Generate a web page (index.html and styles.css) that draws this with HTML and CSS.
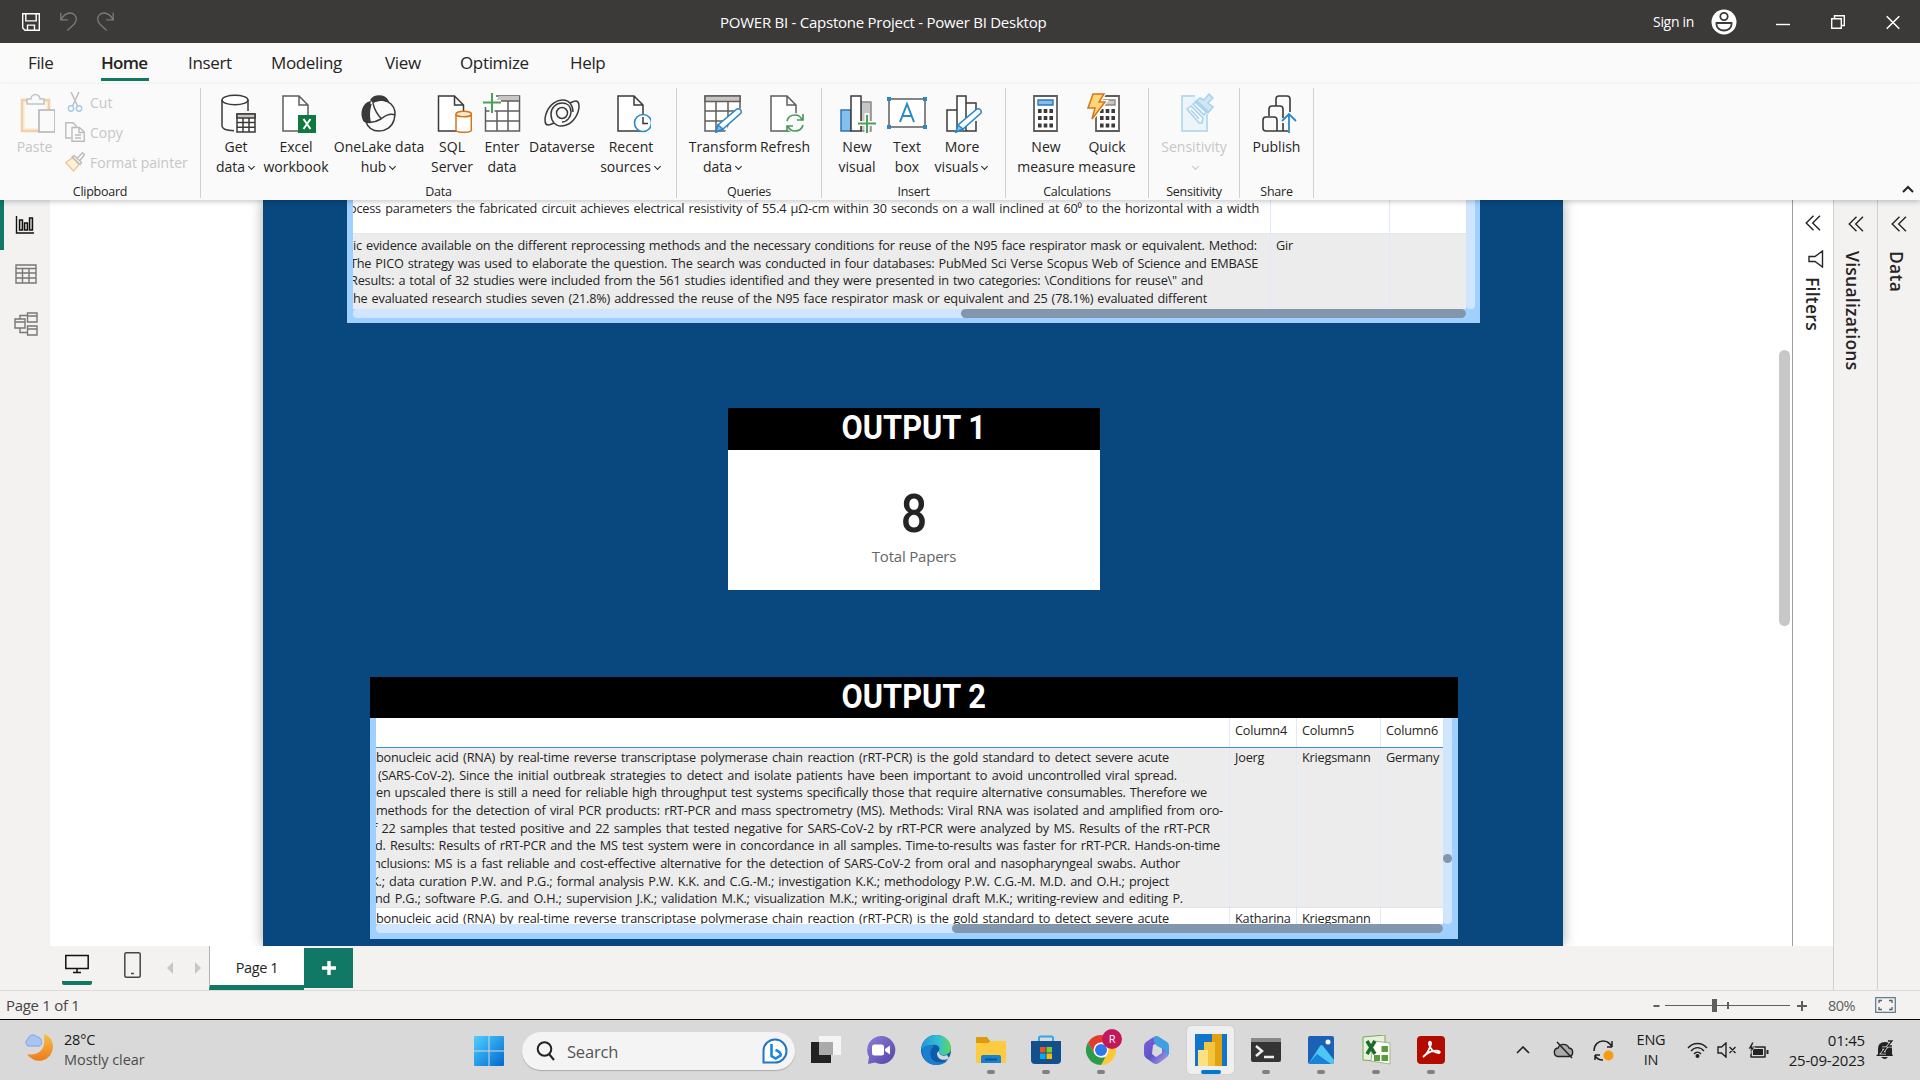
FILE: index.html
```html
<!DOCTYPE html>
<html lang="en">
<head>
<meta charset="utf-8">
<title>POWER BI - Capstone Project - Power BI Desktop</title>
<link rel="stylesheet" href="styles.css">
</head>
<body>
<header class="titlebar">
  <div class="quick">
    <svg width="18" height="18" viewBox="0 0 18 18" fill="none" stroke="#fff" stroke-width="1.4"><path d="M.7.7h16.6v16.6H3L.7 15zM3.8.7v7.2h10.4V.7M5.5 17.3v-5.2h7v5.2"/></svg>
    <svg width="17" height="19" viewBox="0 0 17 19" fill="none" stroke="#7d7b79" stroke-width="1.3"><path d="M.8.8v7h7M1 7.500C3 4 6 1 10 1c4 0 6.300 3 6.300 6 0 2-.8 3.500-2 5l-7 6.500"/></svg>
    <svg width="17" height="19" viewBox="0 0 17 19" fill="none" stroke="#7d7b79" stroke-width="1.3"><path d="M16.200.8v7h-7M16 7.500C14 4 11 1 7 1 3 1 .7 4 .7 7c0 2 .8 3.500 2 5l7 6.500"/></svg>
  </div>
  <h1 class="app-title">POWER BI - Capstone Project - Power BI Desktop</h1>
  <div class="account"><span class="signin">Sign in</span>
    <svg width="26" height="26" viewBox="0 0 26 26"><circle cx="13" cy="13" r="12.500" fill="#fff"/><g fill="none" stroke="#3b3a39" stroke-width="1.800"><circle cx="13" cy="7.500" r="3.700"/><path d="M5.500 14h15v1.500a7.500 6 0 0 1-15 0z"/></g></svg>
  </div>
  <div class="winbtns">
    <svg width="14" height="16" viewBox="0 0 14 16"><path d="M0 10.500h14" stroke="#fff" stroke-width="1.400"/></svg>
    <svg width="14" height="16" viewBox="0 0 14 16" fill="none" stroke="#fff" stroke-width="1.400"><path d="M.7 4.700h9.600v9.600H.7zM3.500 4.500V1.700h9.800v9.800h-3"/></svg>
    <svg width="14" height="16" viewBox="0 0 14 16" stroke="#fff" stroke-width="1.500"><path d="M.7 2.200l12.600 12.600M13.300 2.200L.7 14.800"/></svg>
  </div>
</header>

<nav class="tabs">
  <a class="t-file">File</a><a class="t-home active">Home</a><a class="t-insert">Insert</a><a class="t-model">Modeling</a><a class="t-view">View</a><a class="t-opt">Optimize</a><a class="t-help">Help</a>
</nav>

<section class="ribbon">
  <div class="group g-clip">
    <div class="items">
      <button class="cmd paste off"><svg class="ic" viewBox="0 0 40 40" fill="none"><path d="M7 7h27v31H7z" fill="#fdf0d5" stroke="#f0d0a8" stroke-width="2.500"/><path d="M10 10h21v25H10z" fill="#fafafa"/><path d="M12 11V6h4a4.500 4.500 0 0 1 9 0h4v5z" fill="#fafafa" stroke="#c4c4c4" stroke-width="1.600"/><path d="M24 17h16v22H24z" fill="#fafafa" stroke="#b4b4b4" stroke-width="1.600"/></svg><span>Paste</span></button>
      <div class="minis">
        <button class="mini"><svg width="20" height="20" viewBox="0 0 20 20" fill="none" stroke="#bbb" stroke-width="1.400"><path d="M6 0l6.500 14M14 0L7.500 14"/><g stroke="#a5cbe3"><circle cx="6" cy="16.500" r="2.700"/><circle cx="14" cy="16.500" r="2.700"/></g></svg>Cut</button>
        <button class="mini"><svg width="20" height="20" viewBox="0 0 20 20" fill="none" stroke="#bbb" stroke-width="1.400"><path d="M6 16H.8V.8H8l3 3v2"/><path d="M7 5.500h7.500l4.700 4.500v9.300H7zM14 6v4.500h5M10 13h6M10 16h6"/></svg>Copy</button>
        <button class="mini"><svg width="20" height="20" viewBox="0 0 20 20" fill="none" stroke="#bbb" stroke-width="1.400"><path d="M.8 10.500L8 5.500l6 7L8.500 19z" fill="#fdf0d5" stroke="#ecc79d"/><path d="M7 5l2-1.500 7.500 7-1.500 2zM12 6.500L17.500.8l2 2L14.500 9"/></svg>Format painter</button>
      </div>
    </div>
    <div class="gname">Clipboard</div>
  </div>

  <div class="group g-data">
    <div class="items">
      <button class="cmd w60"><svg class="ic" viewBox="0 0 40 40" fill="none" stroke="#3b3a39" stroke-width="1.500"><ellipse cx="19" cy="7" rx="13" ry="4.800" fill="#fff"/><path d="M6 7v26c0 2.600 5 4.500 12 4.800M32 7v11"/><path d="M21 21h18v18H21z" fill="#fff"/><path d="M21 21h18v4H21z" fill="#c8c6c4"/><path d="M21 29.500h18M21 34.300h18M27 25v14M33 25v14"/></svg><span>Get<br>data<i class="dd"></i></span></button>
      <button class="cmd w60"><svg class="ic" viewBox="0 0 40 40"><path d="M7 3h16l9 9v26H7zM23 3v9h9" fill="#fff" stroke="#605e5c" stroke-width="1.500"/><path d="M22 22h18v18H22z" fill="#10793f"/><path d="M27.500 26l7 10M34.500 26l-7 10" stroke="#fff" stroke-width="2"/></svg><span>Excel<br>workbook</span></button>
      <button class="cmd w106"><svg class="ic" viewBox="0 0 40 40" fill="none" stroke="#3b3a39" stroke-width="1.500"><path d="M5 28C1 20 4 11 11 9c-1 7-2 14-1 20-2 0-4 0-5-1zM12 7c3-5 13-6 17 1-6-2-11-1-15 1z" fill="#3b3a39"/><path d="M14 9c6-3 14-2 18 2 4 4 5 10 3 16-2 7-8 11-15 11-6 0-11-3-13-9 5 1 10 0 15-3 5-4 9-6 14-4M14 10c1 6 5 13 9 16M12 11c-2 6-2 13-1 18"/></svg><span>OneLake data<br>hub<i class="dd"></i></span></button>
      <button class="cmd w40"><svg class="ic" viewBox="0 0 40 40"><path d="M6.500 3h16l9 9v26h-25zM22.500 3v9h9" fill="#fff" stroke="#3b3a39" stroke-width="1.500"/><path d="M24 21v16c0 1.500 3.500 2.300 7.500 2.300S39.300 38.500 39.300 37V21" fill="#fff" stroke="#d67417" stroke-width="1.500"/><ellipse cx="31.700" cy="21" rx="7.700" ry="2.800" fill="#fdebd0" stroke="#d67417" stroke-width="1.500"/></svg><span>SQL<br>Server</span></button>
      <button class="cmd w60"><svg class="ic" viewBox="0 0 40 40" fill="none" stroke="#605e5c" stroke-width="1.500"><path d="M3.500 14v24h34V3H14" fill="#fff"/><path d="M17 3h20v5H14z" fill="#c8c6c4" stroke="none"/><path d="M17 8h20M3.500 18h34M3.500 28h34M15 18v20M26 8v30"/><path d="M10 0v20M1 9.500h18" stroke="#fafafa" stroke-width="5"/><path d="M10 0v20M1 9.500h18" stroke="#4ba155" stroke-width="2"/></svg><span>Enter<br>data</span></button>
      <button class="cmd w60"><svg class="ic" viewBox="0 0 40 40" fill="none" stroke="#3b3a39" stroke-width="1.500"><circle cx="20" cy="20" r="5.500"/><path d="M34 8c3 0 4 5 2 11-3 9-10 14-17 14-6 0-10-5-10-12 0-6 5-11 11-11 5 0 9 3 9 9 0 5-4 10-9 10"/><path d="M6 32c-3 0-4-5-2-11C7 12 14 7 21 7c6 0 10 5 10 12M34 8c-2 0-4 1-6 2M6 32c2 0 4-1 6-2"/></svg><span>Dataverse</span></button>
      <button class="cmd w76"><svg class="ic" viewBox="0 0 40 40" fill="none"><path d="M7 3h16l9 9v26H7zM23 3v9h9" fill="#fff" stroke="#3b3a39" stroke-width="1.500"/><circle cx="32" cy="30" r="8.500" fill="#fff" stroke="#2b88c8" stroke-width="1.600"/><path d="M32 24v6.500h5" stroke="#3b3a39" stroke-width="1.500"/></svg><span>Recent<br>sources<i class="dd"></i></span></button>
    </div>
    <div class="gname">Data</div>
  </div>

  <div class="group g-query">
    <div class="items">
      <button class="cmd w78"><svg class="ic" viewBox="0 0 40 40" fill="none" stroke="#605e5c" stroke-width="1.500"><path d="M2 3h35v35H2z" fill="#fff"/><path d="M2 3h35v5.500H2z" fill="#c8c6c4"/><path d="M2 18h35M2 28h35M13 9v29M25 9v29"/><path d="M22 39h18V14l-6 4z" fill="#fafafa" stroke="none"/><path d="M13 39l2-7 19-16c2-1 5 1 4 4L20 36z" fill="#fff" stroke="#2b88c8"/><path d="M13 39l2-7 5 4z" fill="#83beec" stroke="#2b88c8"/></svg><span>Transform<br>data<i class="dd"></i></span></button>
      <button class="cmd w46"><svg class="ic" viewBox="0 0 40 40" fill="none"><path d="M6 3h16l9 9v26H6zM22 3v9h9" fill="#fff" stroke="#605e5c" stroke-width="1.500"/><circle cx="30" cy="30" r="10" fill="#fafafa"/><path d="M22 28c1-4 4-6 8-6 3 0 6 2 7 5M38 21v6h-6M38 32c-1 4-4 6-8 6-3 0-6-2-7-5M22 39v-6h6" stroke="#4b9b58" stroke-width="1.700"/></svg><span>Refresh</span></button>
    </div>
    <div class="gname">Queries</div>
  </div>

  <div class="group g-insert">
    <div class="items">
      <button class="cmd w50"><svg class="ic" viewBox="0 0 40 40" stroke="#3b3a39" stroke-width="1.500"><path d="M24 9h10v29H24z" fill="#c8c6c4" stroke="#8a8886"/><path d="M4 17h10v21H4z" fill="#83beec" stroke="#2b78b8"/><path d="M14 3h10v35H14z" fill="#fff"/><path d="M30 20v20M20 30.500h19" stroke="#fafafa" stroke-width="5"/><path d="M30 22v18M21 30.500h18" stroke="#4ba155" stroke-width="2"/></svg><span>New<br>visual</span></button>
      <button class="cmd w50"><svg class="ic" viewBox="0 0 40 40" fill="none"><path d="M2 6h36v28H2z" fill="#fff" stroke="#605e5c" stroke-width="1.500"/><path d="M0 4h4v4H0zM36 4h4v4h-4zM0 32h4v4H0zM36 32h4v4h-4z" fill="#2b88c8"/><path d="M13 29l7-18 7 18M15.500 23h9" stroke="#2b88c8" stroke-width="2"/></svg><span>Text<br>box</span></button>
      <button class="cmd w60"><svg class="ic" viewBox="0 0 40 40" stroke="#3b3a39" stroke-width="1.500" fill="#fff"><path d="M24 10h10v28H24zM5 17h10v21H5zM15 3h9v35h-9z"/><path d="M25 39h14V15l-7 4z" fill="#fafafa" stroke="none"/><path d="M14 39l2-7 19-16c2-1 5 1 4 4L21 36z" stroke="#2b88c8"/><path d="M14 39l2-7 5 4z" fill="#83beec" stroke="#2b88c8"/><path d="M34 28v10h-9" fill="none"/></svg><span>More<br>visuals<i class="dd"></i></span></button>
    </div>
    <div class="gname">Insert</div>
  </div>

  <div class="group g-calc">
    <div class="items">
      <button class="cmd w60"><svg class="ic" viewBox="0 0 40 40"><path d="M8 3h23v35H8z" fill="#fff" stroke="#605e5c" stroke-width="1.800"/><path d="M12 7h15v5H12z" fill="#83beec" stroke="#2b78b8" stroke-width="1.400"/><path d="M12 18h15M12 25h15M12 32.500h15" stroke="#3b3a39" stroke-width="4" stroke-dasharray="3.600 2.100"/></svg><span>New<br>measure</span></button>
      <button class="cmd w62"><svg class="ic" viewBox="0 0 40 40"><path d="M9 3h23v35H9z" fill="#fff" stroke="#605e5c" stroke-width="1.800"/><path d="M16 7h12v5H16z" fill="#c8c6c4" stroke="#8a8886" stroke-width="1.400"/><path d="M13 18h15M13 25h15M13 32.500h15" stroke="#3b3a39" stroke-width="4" stroke-dasharray="3.600 2.100"/><path d="M6 1h11l-5 8h6L5 26l3-11H1z" fill="#ffd77a" stroke="#fafafa" stroke-width="4"/><path d="M6 1h11l-5 8h6L5 26l3-11H1z" fill="#ffd77a" stroke="#d67417" stroke-width="1.500"/></svg><span>Quick<br>measure</span></button>
    </div>
    <div class="gname">Calculations</div>
  </div>

  <div class="group g-sens">
    <div class="items">
      <button class="cmd w60 off"><svg class="ic" viewBox="0 0 40 40" fill="none" stroke="#a9d3ec" stroke-width="1.500"><path d="M21 3H8v35h25V21" fill="#eef5fa"/><path d="M13 16l4-3 12 12-1 5-3 0zM17 17l8 9" fill="#fafafa"/><path d="M21 9l5-4 4 2 5-6 4 4-5 5 5 4-5 6z" fill="#cfe6f4"/><path d="M23 8l12 11M19 11l3-2 10 10-2 3z"/></svg><span>Sensitivity<br><i class="dd"></i></span></button>
    </div>
    <div class="gname">Sensitivity</div>
  </div>

  <div class="group g-share">
    <div class="items">
      <button class="cmd w60"><svg class="ic" viewBox="0 0 40 40" fill="none" stroke="#3b3a39" stroke-width="1.600"><path d="M19 13V6c0-2 1-3 3-3h8c2 0 3 1 3 3v13M12 23v-7c0-2 1-3 3-3h8c2 0 3 1 3 3v9M20 38V27c0-2-1-3-3-3h-8c-2 0-3 1-3 3v8c0 2 1 3 3 3h22M26 30v8"/><path d="M32 40V21M25 28l7-7 7 7" stroke="#2b88c8" stroke-width="1.800"/></svg><span>Publish</span></button>
    </div>
    <div class="gname">Share</div>
  </div>
  <svg class="collapse" width="12" height="8" viewBox="0 0 12 8"><path d="M1 7l5-5 5 5" fill="none" stroke="#252423" stroke-width="2"/></svg>
</section>

<main class="work">
  <aside class="views">
    <div class="v on"><svg width="20" height="20" viewBox="0 0 20 20" fill="#c8c6c4" stroke="#111" stroke-width="1.400"><path d="M1.500 1v17H19" fill="none"/><path d="M4.500 5h3v10h-3zM9.500 8h3v7h-3zM14.500 3h3v12h-3z"/></svg></div>
    <div class="v"><svg width="22" height="20" viewBox="0 0 22 20" fill="none" stroke="#797775" stroke-width="1.400"><path d="M1 1h20v18H1zM1 4.500h20M1 9h20M1 14h20M7.500 4.500V19M14 4.500V19"/></svg></div>
    <div class="v"><svg width="24" height="24" viewBox="0 0 24 24" fill="none" stroke="#797775" stroke-width="1.400"><path d="M1 7h10v9H1zM1 10h10M13.500 1h9.500v9h-9.500zM13.500 4h9.500M13.500 14h9.500v9h-9.500zM13.500 17h9.500M6 7V3.500h7.500M6 16v4.500h7.500"/></svg></div>
  </aside>

  <div class="canvas">
    <div class="page">
      <section class="visual table1">
        <div class="grid">
          <div class="row tail">
            <div class="cell abs"><p style="width:910px;margin-left:-4px">ocess parameters the fabricated circuit achieves electrical resistivity of 55.4 µΩ-cm within 30 seconds on a wall inclined at 60⁰ to the horizontal with a width</p></div><div class="cell n1"></div><div class="cell n2"></div>
          </div>
          <div class="row grey">
            <div class="cell abs"><p style="width:904px">ic evidence available on the different reprocessing methods and the necessary conditions for reuse of the N95 face respirator mask or equivalent. Method:</p><p style="width:908px;margin-left:-3px">The PICO strategy was used to elaborate the question. The search was conducted in four databases: PubMed Sci Verse Scopus Web of Science and EMBASE</p><p style="width:853px;margin-left:-3px">Results: a total of 32 studies were included from the 561 studies identified and they were presented in two categories: \Conditions for reuse\" and</p><p style="width:854px">he evaluated research studies seven (21.8%) addressed the reuse of the N95 face respirator mask or equivalent and 25 (78.1%) evaluated different</p></div><div class="cell n1">Gir</div><div class="cell n2"></div>
          </div>
        </div>
        <div class="vtrack"></div>
        <div class="htrack"><div class="thumb"></div></div>
      </section>

      <section class="visual card">
        <h2><span>OUTPUT 1</span></h2>
        <div class="value">8</div>
        <div class="label">Total Papers</div>
      </section>

      <section class="visual table2">
        <h2><span>OUTPUT 2</span></h2>
        <div class="grid">
          <div class="row head"><div class="cell abs"></div><div class="cell c4">Column4</div><div class="cell c5">Column5</div><div class="cell c6">Column6</div></div>
          <div class="row grey">
            <div class="cell abs"><p style="width:793px">bonucleic acid (RNA) by real-time reverse transcriptase polymerase chain reaction (rRT-PCR) is the gold standard to detect severe acute</p><p style="width:799px;margin-left:2px">(SARS-CoV-2). Since the initial outbreak strategies to detect and isolate patients have been important to avoid uncontrolled viral spread.</p><p style="width:831px">en upscaled there is still a need for reliable high throughput test systems specifically those that require alternative consumables. Therefore we</p><p style="width:847px">methods for the detection of viral PCR products: rRT-PCR and mass spectrometry (MS). Methods: Viral RNA was isolated and amplified from oro-</p><p style="width:837px;margin-left:-3px">f 22 samples that tested positive and 22 samples that tested negative for SARS-CoV-2 by rRT-PCR were analyzed by MS. Results of the rRT-PCR</p><p style="width:845px;margin-left:-1px">d. Results: Results of rRT-PCR and the MS test system were in concordance in all samples. Time-to-results was faster for rRT-PCR. Hands-on-time</p><p style="width:807px;margin-left:-3px">nclusions: MS is a fast reliable and cost-effective alternative for the detection of SARS-CoV-2 from oral and nasopharyngeal swabs. Author</p><p style="width:798px;margin-left:-5px">K.; data curation P.W. and P.G.; formal analysis P.W. K.K. and C.G.-M.; investigation K.K.; methodology P.W. C.G.-M. M.D. and O.H.; project</p><p style="width:808px;margin-left:-1px">nd P.G.; software P.G. and O.H.; supervision J.K.; validation M.K.; visualization M.K.; writing-original draft M.K.; writing-review and editing P.</p></div><div class="cell c4">Joerg</div><div class="cell c5">Kriegsmann</div><div class="cell c6">Germany</div>
          </div>
          <div class="row cut"><div class="cell abs"><p style="width:793px">bonucleic acid (RNA) by real-time reverse transcriptase polymerase chain reaction (rRT-PCR) is the gold standard to detect severe acute</p></div><div class="cell c4">Katharina</div><div class="cell c5">Kriegsmann</div><div class="cell c6"></div></div>
        </div>
        <div class="vtrack"><div class="dot"></div></div>
        <div class="htrack"><div class="thumb"></div></div>
      </section>
    </div>
    <div class="vscroll"></div>
  </div>

  <aside class="pane filters">
    <svg class="chev" viewBox="0 0 16 16"><path d="M8.500.7L1.200 8l7.300 7.300M15 .7L7.700 8l7.300 7.300"/></svg>
    <svg class="funnel" width="16" height="18" viewBox="0 0 16 18" fill="none" stroke="#252423" stroke-width="1.400"><path d="M14.500 1v16L7 11.500H1v-5h6z"/></svg>
    <span>Filters</span>
  </aside>
  <aside class="pane vis"><svg class="chev" viewBox="0 0 16 16"><path d="M8.500.7L1.200 8l7.300 7.300M15 .7L7.700 8l7.300 7.300"/></svg><span>Visualizations</span></aside>
  <aside class="pane data"><svg class="chev" viewBox="0 0 16 16"><path d="M8.500.7L1.200 8l7.300 7.300M15 .7L7.700 8l7.300 7.300"/></svg><span>Data</span></aside>

  <div class="pagetabs">
    <div class="desk"><svg width="24" height="20" viewBox="0 0 24 20" fill="none" stroke="#111" stroke-width="1.500"><path d="M.8 1.500h22.400v13H.8zM12 14.500v4M8 18.500h8"/></svg></div>
    <svg class="phone" width="17" height="26" viewBox="0 0 17 26" fill="none" stroke="#484644" stroke-width="1.500"><rect x=".8" y=".8" width="15.400" height="24.400" rx="1.500"/><path d="M7 21.500h3"/></svg>
    <svg class="arr" width="6" height="12" viewBox="0 0 6 12"><path d="M6 0v12L0 6z" fill="#c8c6c4"/></svg>
    <svg class="arr two" width="6" height="12" viewBox="0 0 6 12"><path d="M0 0v12l6-6z" fill="#c8c6c4"/></svg>
    <div class="ptab">Page 1</div>
    <div class="add"><svg width="14" height="14" viewBox="0 0 14 14"><path d="M7 0v14M0 7h14" stroke="#fff" stroke-width="3.400"/></svg></div>
  </div>
</main>

<footer class="status">
  <span class="pcount">Page 1 of 1</span>
  <div class="zoom">
    <svg width="154" height="16" viewBox="0 0 154 16" stroke="#605e5c" fill="none"><path d="M.5 9h6M144 9h10M149 4v10" stroke-width="2"/><path d="M12 8.500h125" stroke-width="1.200"/><path d="M61.500 2v13" stroke-width="5"/><path d="M75 5v7" stroke-width="2"/></svg>
    <span class="pct">80%</span>
    <svg width="21" height="16" viewBox="0 0 21 16" fill="none" stroke="#605e5c" stroke-width="1.300"><path d="M.7.700h19.600v14.600H.7z" stroke="#5f7f95"/><path d="M4 6V3.500h3M14 3.500h3V6M17 10v2.500h-3M7 12.500H4V10"/></svg>
  </div>
</footer>

<div class="taskbar">
  <div class="weather">
    <svg width="30" height="30" viewBox="0 0 30 30"><defs><linearGradient id="mo" x2="0" y2="1"><stop stop-color="#f5c14a"/><stop offset="1" stop-color="#ee7a1c"/></linearGradient></defs><path d="M20 1c6 2 9 7 9 13a14 14 0 0 1-26 7c8 2 16-2 17-10 .5-4 0-7 0-10z" fill="url(#mo)"/><path d="M4 13a4 4 0 0 1 0-7 5 5 0 0 1 9-2c4-1 7 8 2 9z" fill="#a9c4f2" stroke="#7fa2e0"/></svg>
    <div class="wtxt"><b>28°C</b><span>Mostly clear</span></div>
  </div>
  <div class="start"><svg width="30" height="30" viewBox="0 0 30 30"><defs><linearGradient id="wn" x2="1" y2="1"><stop stop-color="#4fd0ff"/><stop offset="1" stop-color="#0068cf"/></linearGradient></defs><path d="M0 1q0-1 1-1h13.500v14.500H0zM15.500 0H29q1 0 1 1v13.500H15.500zM0 15.500h14.500V30H1q-1 0-1-1zM15.500 15.500H30V29q0 1-1 1H15.500z" fill="url(#wn)"/></svg></div>
  <div class="search">
    <svg width="19" height="20" viewBox="0 0 19 20" fill="none" stroke="#222" stroke-width="2"><circle cx="8.500" cy="8" r="6.800"/><path d="M13 13l5 6"/></svg>
    <span>Search</span>
    <svg width="26" height="26" viewBox="0 0 26 26"><path d="M1.500 24.500V12.500a11.500 11.500 0 1 1 11.500 12z" fill="#fff" stroke="#2176c7" stroke-width="2"/><path d="M9.500 6v12l4 2.500 5-3c1-2-1-4-5-5.500" fill="none" stroke="#1a86dc" stroke-width="2.600"/></svg>
  </div>
  <div class="apps">
    <div class="app"><svg viewBox="0 0 30 30"><path d="M0 7h20v21H0z" fill="#222"/><path d="M8 1h22v19H8z" fill="#f4f4f4"/><path d="M8 7h14v13H8z" fill="#aaa"/></svg></div>
    <div class="app"><svg viewBox="0 0 30 30"><defs><linearGradient id="ch" x2="1" y2="1"><stop stop-color="#8f7ed6"/><stop offset="1" stop-color="#5145a8"/></linearGradient></defs><path d="M15 1a14 14 0 1 1-6 26.500L2 29l1-7A14 14 0 0 1 15 1z" fill="url(#ch)"/><rect x="6" y="9.500" width="12" height="11" rx="2.500" fill="#fff"/><path d="M19 14l5-3.500v9L19 16z" fill="#fff"/></svg></div>
    <div class="app"><svg viewBox="0 0 30 30"><defs><linearGradient id="eg" x2="1"><stop stop-color="#1e96dc"/><stop offset=".6" stop-color="#35c1d0"/><stop offset="1" stop-color="#5fd656"/></linearGradient></defs><circle cx="15" cy="15" r="15" fill="#0d5ca8"/><path d="M0 15C1 5 8 0 15 0c9 0 15 6 15 13 0 4-3 7-7 7s-6-2-5-4c2-4-2-7-7-6C5 10 2 13 0 15z" fill="url(#eg)"/><path d="M1 15c3-5 9-6 12-4-6 5-4 14 2 16 5 1 9 0 12-2-3 4-8 5-12 5C6 30 1 23 1 15z" fill="#1b7fd0"/><path d="M18 16c-1 3 3 6 8 4l2 3c-3 3-12 3-12-5z" fill="#d9d9d9"/></svg></div>
    <div class="app run"><svg viewBox="0 0 30 30"><path d="M0 3q0-1 1-1h10l3 4v6H0z" fill="#dd9a0c"/><path d="M0 8h12l3-2h15v21q0 1-1 1H1q-1 0-1-1z" fill="#fccb3f"/><path d="M5 28v-6q0-2 2-2h16q2 0 2 2v6z" fill="#1a80d0"/><path d="M9 24.500h12" stroke="#0b559b" stroke-width="2"/></svg></div>
    <div class="app run"><svg viewBox="0 0 30 30"><path d="M8 8V3q0-1.500 1.500-1.500h11Q22 1.500 22 3v5" fill="none" stroke="#33a9e6" stroke-width="2"/><path d="M0 6h30v19q0 4-4 4H4q-4 0-4-4z" fill="#144f8d"/><path d="M9 12h5.500v5.500H9z" fill="#f1511b"/><path d="M15.500 12H21v5.500h-5.500z" fill="#80cc28"/><path d="M9 18.500h5.500V24H9z" fill="#00adef"/><path d="M15.500 18.500H21V24h-5.500z" fill="#fbbc09"/></svg></div>
    <div class="app run chrome"><svg viewBox="0 0 30 30"><path d="M15 0a15 15 0 0 1 13 7.500H15L8.500 18.700 2 7.500A15 15 0 0 1 15 0z" fill="#e33b2e"/><path d="M2 7.500l6.500 11.200L15 22.500h6.500L15 30A15 15 0 0 1 2 7.500z" fill="#2c9c4b"/><path d="M28 7.500A15 15 0 0 1 15 30l6.500-11.300L22 12l-7-4.500z" fill="#fcc934"/><circle cx="15" cy="15" r="7.500" fill="#fff"/><circle cx="15" cy="15" r="6" fill="#2f77e8"/></svg><em>R</em></div>
    <div class="app"><svg viewBox="0 0 30 30"><defs><linearGradient id="m3" x1="0" x2="1" y2="1"><stop stop-color="#8a5be0"/><stop offset=".5" stop-color="#5a55c8"/><stop offset="1" stop-color="#b8a5ee"/></linearGradient></defs><path d="M11 3l5-2 9 6q2 1.500 2 4v8q0 2-2 4l-7 5q-3 2-6 0l-7-5q-2-1.500-2-4v-8q0-2.500 2-4zM12 10l-1 9 4 3 6-4v-7l-4-3z" fill="url(#m3)" fill-rule="evenodd"/><path d="M13 2q2-2 5 0l8 5q2 1.500 2 4v8l-2 3c0-7-4-8-8-10-4-2-6-5-5-10z" fill="#3f9fe0"/></svg></div>
    <div class="app sel"><svg viewBox="0 0 32 32"><path d="M0 0h32v32H0z" fill="#1075cb"/><path d="M17 0h10v32H17z" fill="#e2a10e"/><path d="M9 8h11v24H9z" fill="#f3c63e"/><path d="M3 16h10v16H3z" fill="#fbe184"/></svg></div>
    <div class="app run"><svg viewBox="0 0 30 30"><rect y="3" width="30" height="24" rx="2" fill="#343434"/><path d="M0 7V5q0-2 2-2h26q2 0 2 2v2z" fill="#8a8a8a"/><path d="M5 11l6 5-6 5M13 22h10" fill="none" stroke="#eee" stroke-width="2.500"/></svg></div>
    <div class="app run"><svg viewBox="0 0 30 30"><rect x="2" y="1" width="26" height="28" rx="2" fill="#1b62b6"/><path d="M3 28l11-17q1.500-2 3 0l11 14v2q0 2-2 2H4z" fill="#4ec5f2"/><path d="M3 28l8-9 14 10H4z" fill="#1a83d8"/><circle cx="22" cy="7" r="2.500" fill="#fff"/></svg></div>
    <div class="app run"><svg viewBox="0 0 30 30"><path d="M2 2l22-2v27L2 25z" fill="#e6f0dc" stroke="#7aa953"/><path d="M12 6l17 2v21l-19-3z" fill="#fff" stroke="#9ab986"/><path d="M13 20h6v6h-6zM20.500 20H27v6h-6.500zM20.500 11H27v6h-6.500z" fill="#5a9b3a"/><path d="M6 6l8 13M14 6L6 19" stroke="#1f6b2b" stroke-width="3.500"/></svg></div>
    <div class="app run"><svg viewBox="0 0 30 30"><rect x="1" y="1" width="28" height="28" rx="4" fill="#b30b00"/><path d="M7 22c3-2 7-8 8-13 0-3-2-3-2 0 1 5 5 9 10 9 2-1 0-3-5-2-4 0-8 3-11 6z" fill="none" stroke="#fff" stroke-width="1.800"/></svg></div>
  </div>
  <div class="tray">
    <svg class="up" width="14" height="8" viewBox="0 0 14 8"><path d="M1 7l6-6 6 6" fill="none" stroke="#222" stroke-width="1.600"/></svg>
    <svg class="cloud" width="21" height="18" viewBox="0 0 21 18"><path d="M5 15.500a4.300 4.300 0 0 1 0-8.500 6 6 0 0 1 11 0 4.300 4.300 0 0 1 0 8.500z" fill="#aaa" stroke="#222" stroke-width="1.400"/><path d="M4 1l15 16" stroke="#222" stroke-width="1.500"/></svg>
    <svg class="sync" width="21" height="21" viewBox="0 0 21 21"><path d="M1 11C1 4 6 1 10 1c4 0 7 2 9 6V1M19 7h-5M10 20c-4 0-7-2-8-5v5M2 15h5" fill="none" stroke="#222" stroke-width="1.500"/><circle cx="15.500" cy="15.500" r="5" fill="#fa9a0e"/></svg>
    <div class="lang">ENG<br>IN</div>
    <svg class="wifi" width="21" height="16" viewBox="0 0 21 16" fill="none" stroke="#222" stroke-width="1.400"><path d="M1 6c5-6 14-6 19 0M4 9c4-4.500 9-4.500 13 0M7 12c2-2.500 5-2.500 7 0"/><circle cx="10.500" cy="14" r="1.300" fill="#222"/></svg>
    <svg class="mute" width="20" height="16" viewBox="0 0 20 16" fill="none" stroke="#222" stroke-width="1.400"><path d="M1 5h3.500L9 1v14l-4.500-4H1zM12.500 5l6 6M18.500 5l-6 6"/></svg>
    <svg class="bat" width="21" height="17" viewBox="0 0 21 17"><path d="M3 5h14v10H3z" fill="none" stroke="#222" stroke-width="1.500" stroke-linejoin="round"/><path d="M5 7h10v6H5z" fill="#222"/><path d="M18.500 8h2v4h-2z" fill="#222"/><path d="M4 0L0 7h3l-1 5 5-7H4l2-5z" fill="#222" stroke="#d9d9d9" stroke-width=".8"/></svg>
    <div class="clock">01:45<br>25-09-2023</div>
    <svg class="bell" width="18" height="20" viewBox="0 0 18 20"><path d="M2 14V9q0-7 7-7t7 7v5l1 2H0zM5 17h7q-3 4-7 0z" fill="#222"/><path d="M6 8h4l-4 5h4M12 1h4l-4 5h4" fill="none" stroke="#ddd" stroke-width="2.800"/><path d="M6 8h4l-4 5h4M12 1h4l-4 5h4" fill="none" stroke="#222" stroke-width="1.300"/></svg>
  </div>
</div>
</body>
</html>
```
FILE: styles.css
```css
* { box-sizing: border-box; margin: 0; padding: 0; }
body { width: 1920px; height: 1080px; overflow: hidden; display: flex; flex-direction: column; font-family: "Open Sans", "Noto Sans", sans-serif; color: #252423; background: #f3f2f1; }
svg { display: block; flex: none; }
button { font: inherit; color: inherit; border: 0; background: none; }

.titlebar { height: 43px; flex: none; background: #3b3a39; color: #fff; display: grid; grid-template-columns: 720px 1fr 84px 183px; align-items: center; font-size: 14px; }
.quick { display: flex; align-items: center; gap: 20px; padding-left: 22px; }
.app-title { font-size: 15px; font-weight: 400; letter-spacing: -.25px; }
.account { display: flex; align-items: center; justify-content: space-between; letter-spacing: -.3px; white-space: nowrap; }
.winbtns { display: flex; justify-content: space-between; padding: 0 20px 0 39px; }

.tabs { height: 41px; flex: none; background: #fafafa; display: flex; padding-left: 28px; font-size: 17px; letter-spacing: -.35px; }
.tabs a { display: block; height: 38px; line-height: 40px; white-space: nowrap; }
.t-file { width: 73px; } .t-home { width: 48px; margin-right: 39px; } .t-insert { width: 83px; } .t-model { width: 114px; } .t-view { width: 75px; } .t-opt { width: 110px; }
.tabs .active { border-bottom: 3px solid #117865; font-weight: 600; letter-spacing: -.7px; }

.ribbon { height: 116px; flex: none; background: #fafafa; display: flex; position: relative; z-index: 2; box-shadow: 0 2px 5px rgba(0,0,0,.2); font-size: 14px; letter-spacing: -.25px; }
.group { height: 110px; margin-top: 4px; border-right: 1px solid #d2d0ce; display: flex; flex-direction: column; justify-content: space-between; }
.items { display: flex; }
.gname { text-align: center; font-size: 12.5px; line-height: 12px; }
.g-clip { width: 201px; } .g-data { width: 476px; } .g-query { width: 145px; } .g-insert { width: 184px; } .g-calc { width: 143px; } .g-sens { width: 91px; } .g-share { width: 74px; }
.g-data .items { padding-left: 5px; } .g-query .items { padding-left: 7px; } .g-insert .items, .g-calc .items { padding-left: 10px; }
.g-sens .items, .g-share .items { justify-content: center; }
.cmd { display: flex; flex-direction: column; align-items: center; padding-top: 5px; line-height: 20px; white-space: nowrap; text-align: center; }
.ic { width: 40px; height: 40px; margin-bottom: 4px; }
.paste { width: 69px; } .off { color: #c8c6c4; }
.w40 { width: 40px; } .w46 { width: 46px; } .w50 { width: 50px; } .w60 { width: 60px; } .w62 { width: 62px; } .w76 { width: 78px; } .w78 { width: 78px; } .w106 { width: 106px; }
.dd { display: inline-block; width: 5px; height: 5px; border: solid currentColor; border-width: 0 1.500px 1.500px 0; transform: rotate(45deg); margin: 0 2px 3px 4px; }
.minis { padding-top: 4px; display: flex; flex-direction: column; gap: 10px; margin-left: -4px; }
.mini { display: flex; align-items: center; gap: 5px; height: 20px; color: #c8c6c4; white-space: nowrap; }
.collapse { margin: 101px 6px 0 auto; }

.work { height: 790px; flex: none; display: grid; grid-template: 746px 44px / 50px 1742px 41px 44px 43px; }
.views { background: #f3f2f1; grid-row: 1; }
.v { height: 50px; display: flex; align-items: center; justify-content: center; }
.v + .v { padding: 0 0 2px 2px; }
.v.on { border-left: 4px solid #117865; padding-right: 4px; }
.canvas { background: #fff; display: flex; overflow: hidden; }
.page { width: 1300px; margin-left: 213px; background: #09477f; box-shadow: 0 0 12px rgba(0,0,0,.35); display: flex; flex-direction: column; }
.vscroll { width: 11px; height: 276px; margin: 150px 0 0 216px; border-radius: 6px; background: #c8c8c8; }
.visual { flex: none; }
.grid { overflow: hidden; background: #fff; }
.row { display: flex; font-size: 12.700px; letter-spacing: -.2px; line-height: 17.650px; }
.cell { flex: none; white-space: nowrap; border-left: 1px solid #dfe9f7; padding-left: 5px; }
.cell.abs { border: 0; padding: 0; }
.cell p { text-align: justify; text-align-last: justify; white-space: nowrap; }
.grey { background: #ececec; }

.table1 { width: 1133px; height: 123px; margin-left: 84px; padding-left: 6px; background: #a0d0ff; display: grid; grid-template: 109px 14px / 1113px 14px; }
.table1 .abs { width: 917px; } .table1 .n1 { width: 119px; } .table1 .n2 { width: 77px; }
.tail { height: 34px; border-bottom: 1px solid #e1e8ef; line-height: 16px; }
.table1 .grey { height: 75px; }
.table1 .grey .cell { padding-top: 3px; }
.vtrack { width: 9px; background: #d0e6ff; border-radius: 0 0 4px 4px; }
.htrack { height: 9px; background: #d0e6ff; border-radius: 4px; display: flex; justify-content: flex-end; }
.thumb { height: 9px; width: 505px; border-radius: 5px; background: #8296ae; }

h2 { background: #000; color: #fff; height: 41px; font: 700 34px/38px Roboto, sans-serif; text-align: center; }
h2 span { display: inline-block; transform: scaleX(.905); }
.card { width: 372px; height: 182px; margin: 85px 0 0 465px; background: #fff; text-align: center; }
.card h2 { height: 42px; }
.value { font: 500 54px/60px Roboto, sans-serif; margin-top: 34px; transform: scaleX(.86); }
.label { font-size: 15px; line-height: 20px; margin-top: 2px; color: #666; letter-spacing: -.2px; }

.table2 { width: 1088px; height: 262px; margin: 87px 0 0 107px; padding-left: 6px; background: #a0d0ff; display: grid; grid-template: 41px 206px 15px / 1067px 15px; }
.table2 h2 { grid-column: 1 / 3; margin-left: -6px; }
.table2 .abs { width: 853px; } .c4 { width: 67px; } .c5 { width: 84px; } .c6 { width: 64px; }
.head { height: 30px; border-bottom: 1px solid #3a8fe0; line-height: 24px; }
.table2 .grey { height: 160px; border-bottom: 1px solid #e1e4e8; padding-top: 1px; }
.cut { line-height: 21px; height: 17px; }
.dot { width: 9px; height: 9px; border-radius: 5px; background: #8296ae; margin-top: 136px; }
.table2 .thumb { width: 491px; }

.pane { background: #f3f2f1; border-left: 1px solid #d2d0ce; display: flex; flex-direction: column; align-items: center; padding-top: 15px; font-size: 17.500px; font-weight: 600; }
.pane span { writing-mode: vertical-rl; line-height: 22px; letter-spacing: .25px; }
.filters { background: #fff; border-left: 1px solid #a19f9d; }
.filters .funnel { margin: 19px 0 9px 6px; }
.vis, .data { grid-row: 1 / 3; padding-top: 16px; }
.vis { grid-column: 4; } .data { grid-column: 5; }
.vis span, .data span { margin-top: 19px; margin-right: 5px; }
.chev { width: 16px; height: 16px; fill: none; stroke: #252423; stroke-width: 1.400; }
.pagetabs { grid-column: 1 / 4; grid-row: 2; background: #f3f2f1; display: flex; padding-left: 62px; }
.desk { width: 30px; height: 39px; border-bottom: 4px solid #117865; padding: 8px 0 0 3px; border-radius: 0 0 2px 2px; }
.phone { margin: 6px 0 0 32px; }
.arr { margin: 16px 0 0 26px; } .arr.two { margin-left: 22px; }
.ptab { width: 95px; height: 44px; margin-left: 8px; background: #fff; border-left: 1px solid #b3b0ad; border-bottom: 5px solid #117865; text-align: center; font-size: 14.500px; line-height: 43px; letter-spacing: -.4px; }
.add { width: 49px; height: 40px; margin-top: 2px; background: #117865; display: flex; align-items: center; justify-content: center; }

.status { height: 30px; flex: none; border-top: 1px solid #dcdad8; border-bottom: 1px solid #000; display: flex; justify-content: space-between; align-items: center; padding: 0 24px 0 6px; font-size: 15px; letter-spacing: -.3px; color: #484644; }
.zoom { display: flex; align-items: center; }
.pct { width: 47px; margin-left: 21px; font-size: 14.500px; letter-spacing: -.6px; color: #605e5c; }

.taskbar { height: 60px; flex: none; background: #d9d9d9; display: flex; font-size: 14.500px; letter-spacing: -.2px; color: #1b1b1b; }
.weather { width: 474px; display: flex; padding: 13px 0 0 24px; gap: 10px; }
.wtxt { display: flex; flex-direction: column; line-height: 20px; margin-top: -3px; }
.wtxt b { font-weight: 400; } .wtxt span { color: #4c4c4c; letter-spacing: -.05px; }
.start { width: 48px; padding-top: 16px; }
.search { width: 273px; height: 38px; margin-top: 12px; border-radius: 19px; background: #f4f4f4; box-shadow: 0 1px 1px #aaa; display: flex; align-items: center; padding: 0 7px 0 14px; }
.search span { flex: 1; margin-left: 12px; font-size: 16.500px; color: #555; }
.apps { display: flex; padding-left: 3px; }
.app { width: 55px; height: 60px; padding-top: 15px; display: flex; flex-direction: column; align-items: center; position: relative; }
.app svg { width: 30px; height: 30px; }
.run::after { content: ""; width: 8px; height: 4px; border-radius: 2px; background: #808080; margin-top: 5px; }
.chrome em { position: absolute; left: 29px; top: 9px; width: 20px; height: 20px; border-radius: 10px; background: #c2185b; color: #fff; font: 11px/20px "Open Sans", sans-serif; text-align: center; }
.sel { width: 47px; height: 48px; margin: 6px 4px 0; padding-top: 8px; background: #efefef; border-radius: 4px; box-shadow: 0 0 1px #999; }
.sel svg { width: 32px; height: 32px; }
.sel::after { content: ""; width: 20px; height: 4px; border-radius: 2px; background: #0078d4; margin-top: 4px; }
.tray { display: flex; align-items: center; margin-left: 58px; line-height: 20px; }
.cloud { margin-left: 23px; } .sync { margin-left: 19px; }
.lang { width: 38px; text-align: center; margin-left: 18px; }
.wifi { margin-left: 17px; } .mute { margin-left: 9px; } .bat { margin-left: 11px; }
.clock { width: 90px; margin-left: 6px; text-align: right; font-size: 15px; }
.bell { margin-left: 11px; }
```
